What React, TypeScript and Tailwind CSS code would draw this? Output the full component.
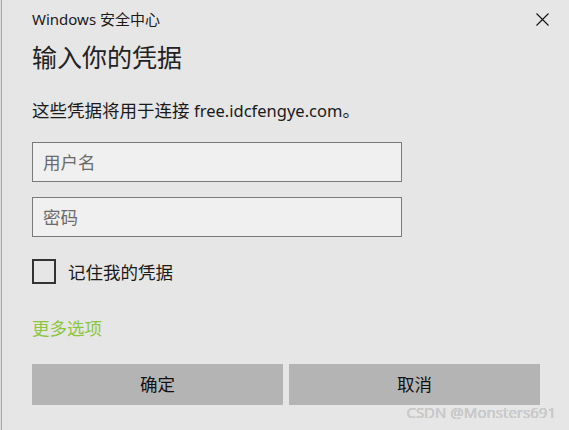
import React from "react";

const font = "font-['Noto_Sans','Noto_Sans_CJK_SC',sans-serif]";

export default function App() {
	return (
		<div className={`w-[569px] h-[430px] bg-[#dcdcdc] pl-px overflow-hidden ${font}`}>
			<div className="relative h-full bg-[#e6e6e6] border-l border-[#97c54a] pl-[30px] flex flex-col">
				<div className="flex items-center justify-between pr-[20px] pt-[7px] h-[30px]">
					<span className="text-[15px] leading-[20px] text-[#1a1a1a]">Windows 安全中心</span>
					<svg width="13" height="13" viewBox="0 0 13 13" className="mt-[2px]">
						<path d="M0.5 0.5 L12.5 12.5 M12.5 0.5 L0.5 12.5" stroke="#111" strokeWidth="1.1" fill="none" />
					</svg>
				</div>
				<h1 className="mt-[11px] text-[25px] leading-[32px] font-normal text-[#222]">输入你的凭据</h1>
				<p className="mt-[25px] text-[17.5px] leading-[24px] text-[#1a1a1a]">
					这些凭据将用于连接 <span className="text-[16.5px]">free.idcfengye.com</span>。
				</p>
				<div className="mt-[19px] flex flex-col gap-[15px]">
					<input
						type="text"
						placeholder="用户名"
						className="w-[370px] h-[40px] bg-[#f0f0f0] border border-[#7a7a7a] px-[10px] text-[17.5px] placeholder:text-[#6b6b6b] outline-none"
					/>
					<input
						type="password"
						placeholder="密码"
						className="w-[370px] h-[40px] bg-[#f0f0f0] border border-[#7a7a7a] px-[10px] text-[17.5px] placeholder:text-[#6b6b6b] outline-none"
					/>
				</div>
				<label className="mt-[22px] flex items-center gap-[12px] select-none">
					<span className="w-[24px] h-[25px] border-2 border-[#333] bg-[#e6e6e6]"></span>
					<span className="text-[17.5px] leading-[24px] text-[#1a1a1a]">记住我的凭据</span>
				</label>
				<a className="mt-[32px] text-[17.5px] leading-[24px] text-[#8cc63f] w-fit">更多选项</a>
				<div className="mt-[24px] flex gap-[6px]">
					<button className="w-[251px] h-[41px] bg-[#b4b4b4] text-[17.5px] text-[#111]">确定</button>
					<button className="w-[251px] h-[41px] bg-[#b4b4b4] text-[17.5px] text-[#111]">取消</button>
				</div>
				<span className="absolute right-[13px] bottom-[8px] text-[15px] leading-[20px] text-[#cfcfcf] [text-shadow:0_0_0.5px_#9a9a9a]">CSDN @Monsters691</span>
			</div>
		</div>
	);
}
